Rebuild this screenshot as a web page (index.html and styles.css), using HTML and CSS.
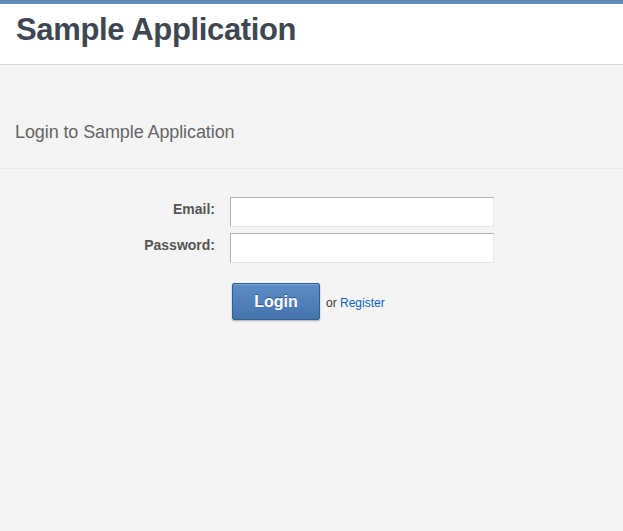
FILE: index.html
```html
<!DOCTYPE html>
<html>
<head>
<meta charset="utf-8">
<title>Sample Application</title>
<link rel="stylesheet" href="styles.css">
</head>
<body>
<div class="topbar"></div>
<header class="header">
  <h1 class="brand">Sample Application</h1>
</header>
<section class="page-head">
  <h2 class="page-title">Login to Sample Application</h2>
</section>
<form class="login-form">
  <label class="field-label" for="email">Email:</label>
  <input class="field-input" id="email" type="text">
  <label class="field-label" for="password">Password:</label>
  <input class="field-input" id="password" type="password">
  <div class="actions">
    <button class="btn-login" type="button">Login</button>
    <span class="or-text">or <a class="register-link" href="#">Register</a></span>
  </div>
</form>
</body>
</html>
```
FILE: styles.css
```css
html, body {
  margin: 0;
  padding: 0;
}
body {
  background: #f4f4f4;
  font-family: "Liberation Sans", Arial, Helvetica, sans-serif;
  height: 531px;
}
.topbar {
  height: 3px;
  border-top: 1px solid #6f8193;
  background: #5b8cc5;
}
.header {
  background: #ffffff;
  border-bottom: 1px solid #d8d8d8;
  box-sizing: border-box;
  height: 61px;
  padding: 8px 16px 0;
}
.brand {
  margin: 0;
  font-size: 31px;
  line-height: 36px;
  font-weight: bold;
  color: #3e4751;
  letter-spacing: -0.35px;
}
.page-head {
  height: 104px;
  box-sizing: border-box;
  border-bottom: 1px solid #e8e8e8;
  padding: 55px 15px 0;
}
.page-title {
  margin: 0;
  font-size: 18px;
  line-height: 24px;
  font-weight: normal;
  color: #666666;
  letter-spacing: -0.1px;
}
.login-form {
  display: grid;
  grid-template-columns: 215px 264px;
  column-gap: 15px;
  row-gap: 6px;
  padding-top: 28px;
}
.field-label {
  text-align: right;
  font-size: 14px;
  font-weight: bold;
  color: #555555;
  line-height: 18px;
  padding-top: 3px;
}
.field-input {
  box-sizing: border-box;
  width: 264px;
  height: 30px;
  margin: 0;
  border: 1px solid;
  border-color: #b0b0b0 #e6e6e6 #e6e6e6 #b0b0b0;
  background: #ffffff;
  outline: none;
  padding: 4px 6px;
  font-size: 14px;
}
.actions {
  grid-column: 2;
  display: flex;
  align-items: center;
  margin-top: 14px;
  padding-left: 2px;
}
.btn-login {
  box-sizing: border-box;
  width: 88px;
  height: 37px;
  border: 1px solid #325f93;
  border-radius: 2px;
  background: linear-gradient(#5d8dc6, #4574ad);
  box-shadow: 0 1px 2px rgba(0, 0, 0, 0.3), inset 0 1px 0 rgba(255, 255, 255, 0.2);
  color: #ffffff;
  font-family: "Liberation Sans", Arial, sans-serif;
  font-size: 16px;
  font-weight: bold;
  text-shadow: 0 -1px 0 rgba(0, 0, 0, 0.35);
  padding: 0;
  cursor: pointer;
}
.or-text {
  margin-left: 6px;
  font-size: 12px;
  color: #333333;
  padding-top: 3px;
}
.register-link {
  color: #0b63c4;
  text-decoration: none;
}
```
